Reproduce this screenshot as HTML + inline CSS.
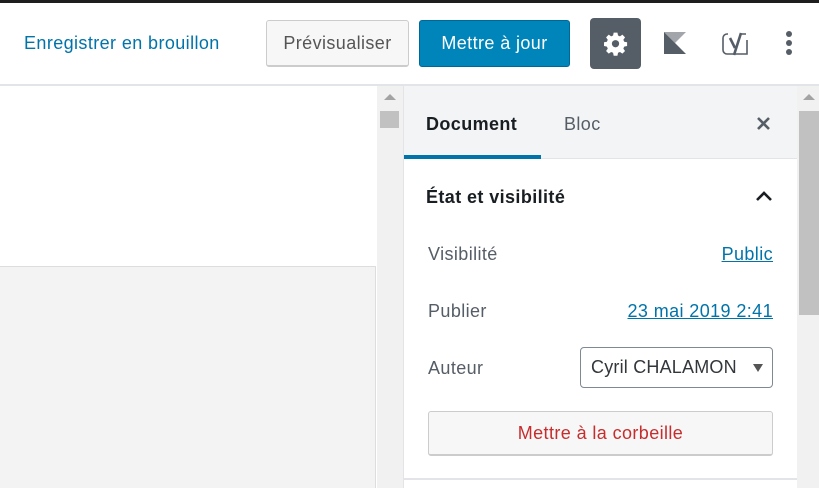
<!DOCTYPE html>
<html><head><meta charset="utf-8"><style>
*{margin:0;padding:0;box-sizing:border-box}
body{width:819px;height:488px;overflow:hidden;background:#fff;font-family:"Liberation Sans",sans-serif;position:relative}
.a{position:absolute}
.t{white-space:nowrap;font-size:18px;letter-spacing:0.4px}
</style></head><body>
<div class="a" style="left:0;top:0;width:819px;height:3px;background:#1e1e1e"></div>
<div class="a" style="left:0;top:84px;width:819px;height:2px;background:#e2e4e7"></div>
<div class="a t" style="left:24px;top:33px;color:#0073aa">Enregistrer en brouillon</div>
<div class="a t" style="left:266px;top:20px;width:143px;height:47px;border:1px solid #ccc;border-bottom:2px solid #ccc;border-radius:3px;background:#f7f7f7;color:#555;text-align:center;line-height:44px">Prévisualiser</div>
<div class="a t" style="left:419px;top:20px;width:151px;height:47px;border:1px solid #006799;border-radius:3px;background:#0085ba;color:#fff;text-align:center;line-height:44px">Mettre à jour</div>
<div class="a" style="left:590px;top:18px;width:51px;height:51px;background:#555d66;border-radius:4px"></div>
<svg class="a" style="left:601px;top:29px" width="29" height="29" viewBox="0 0 24 24"><path fill="#fff" d="M12 3l1.6 0 .5 2.4 1.6.7 2-1.4 2.2 2.2-1.4 2 .7 1.6 2.4.5v3.1l-2.4.5-.7 1.6 1.4 2-2.2 2.2-2-1.4-1.6.7-.5 2.4h-3.1l-.5-2.4-1.6-.7-2 1.4-2.2-2.2 1.4-2-.7-1.6-2.4-.5v-3.1l2.4-.5.7-1.6-1.4-2 2.2-2.2 2 1.4 1.6-.7.5-2.4z"/><circle cx="12" cy="12.2" r="3" fill="#555d66"/></svg>
<svg class="a" style="left:664px;top:32px" width="22" height="22" viewBox="0 0 22 22"><path fill="#a2a6ab" d="M0 0H22L11 11Z"/><path fill="#555d66" d="M0 0L22 22H0Z"/></svg>
<svg class="a" style="left:720px;top:28px" width="32" height="32" viewBox="0 0 32 32"><path fill="none" stroke="#555d66" stroke-width="1.6" d="M8 6h-1a4 4 0 0 0-4 4v12a4 4 0 0 0 4 4h20v-14M20 6h6"/><path fill="none" stroke="#555d66" stroke-width="2.6" d="M10 10l5 10M21 5l-7 22"/></svg>
<div class="a" style="left:786px;top:31px;width:6px;height:6px;border-radius:3px;background:#555d66"></div>
<div class="a" style="left:786px;top:40px;width:6px;height:6px;border-radius:3px;background:#555d66"></div>
<div class="a" style="left:786px;top:49px;width:6px;height:6px;border-radius:3px;background:#555d66"></div>
<div class="a" style="left:0;top:266px;width:376px;height:222px;background:#f3f3f3;border-top:1px solid #ddd;border-right:1px solid #ddd"></div>
<div class="a" style="left:377px;top:86px;width:26px;height:402px;background:#f1f1f1"></div>
<div class="a" style="left:384px;top:94px;width:0;height:0;border-left:6px solid transparent;border-right:6px solid transparent;border-bottom:6px solid #a3a3a3"></div>
<div class="a" style="left:380px;top:111px;width:19px;height:17px;background:#c1c1c1"></div>
<div class="a" style="left:403px;top:86px;width:394px;height:402px;background:#fff;border-left:1px solid #e2e4e7"></div>
<div class="a" style="left:404px;top:86px;width:393px;height:73px;background:#f3f4f5;border-bottom:1px solid #e2e4e7"></div>
<div class="a" style="left:404px;top:155px;width:137px;height:4px;background:#0073aa"></div>
<div class="a t" style="left:426px;top:114px;color:#191e23;font-weight:bold">Document</div>
<div class="a t" style="left:564px;top:114px;color:#555d66">Bloc</div>
<svg class="a" style="left:756px;top:116px" width="15" height="15" viewBox="0 0 15 15"><path d="M2 2L13 13M13 2L2 13" stroke="#555d66" stroke-width="2.6"/></svg>
<div class="a t" style="left:426px;top:187px;color:#191e23;font-weight:bold">État et visibilité</div>
<svg class="a" style="left:755px;top:190px" width="18" height="12" viewBox="0 0 18 12"><path d="M2 10L9 3L16 10" fill="none" stroke="#191e23" stroke-width="2.6"/></svg>
<div class="a t" style="left:428px;top:244px;color:#555d66">Visibilité</div>
<div class="a t" style="right:46px;top:244px;color:#0073aa;text-decoration:underline">Public</div>
<div class="a t" style="left:428px;top:301px;color:#555d66">Publier</div>
<div class="a t" style="right:46px;top:301px;color:#0073aa;text-decoration:underline">23 mai 2019 2:41</div>
<div class="a t" style="left:428px;top:358px;color:#555d66">Auteur</div>
<div class="a t" style="left:580px;top:347px;width:193px;height:41px;border:1px solid #7e8993;border-radius:4px;color:#32373c;padding-left:10px;line-height:39px;letter-spacing:0.2px">Cyril CHALAMON</div>
<div class="a" style="left:753px;top:364px;width:0;height:0;border-left:5px solid transparent;border-right:5px solid transparent;border-top:8px solid #555"></div>
<div class="a t" style="left:428px;top:411px;width:345px;height:45px;border:1px solid #ccc;border-bottom:2px solid #ccc;border-radius:3px;background:#f7f7f7;color:#c62d2d;text-align:center;line-height:43px">Mettre à la corbeille</div>
<div class="a" style="left:404px;top:478px;width:393px;height:2px;background:#e2e4e7"></div>
<div class="a" style="left:797px;top:86px;width:22px;height:402px;background:#f1f1f1"></div>
<div class="a" style="left:803px;top:94px;width:0;height:0;border-left:6px solid transparent;border-right:6px solid transparent;border-bottom:6px solid #a3a3a3"></div>
<div class="a" style="left:799px;top:111px;width:20px;height:204px;background:#c1c1c1"></div>
</body></html>
